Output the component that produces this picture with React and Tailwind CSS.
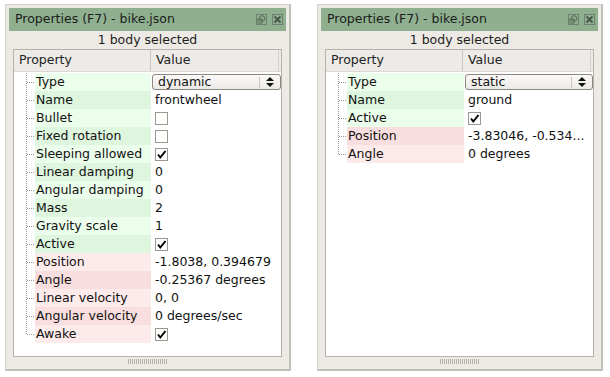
import React from 'react';

const leftRows = [
  { name: 'Type', kind: 'combo', value: 'dynamic', tone: 'g' },
  { name: 'Name', value: 'frontwheel', tone: 'g' },
  { name: 'Bullet', kind: 'check', checked: false, tone: 'g' },
  { name: 'Fixed rotation', kind: 'check', checked: false, tone: 'g' },
  { name: 'Sleeping allowed', kind: 'check', checked: true, tone: 'g' },
  { name: 'Linear damping', value: '0', tone: 'g' },
  { name: 'Angular damping', value: '0', tone: 'g' },
  { name: 'Mass', value: '2', tone: 'g' },
  { name: 'Gravity scale', value: '1', tone: 'g' },
  { name: 'Active', kind: 'check', checked: true, tone: 'g' },
  { name: 'Position', value: '-1.8038, 0.394679', tone: 'r' },
  { name: 'Angle', value: '-0.25367 degrees', tone: 'r' },
  { name: 'Linear velocity', value: '0, 0', tone: 'r' },
  { name: 'Angular velocity', value: '0 degrees/sec', tone: 'r' },
  { name: 'Awake', kind: 'check', checked: true, tone: 'r' },
];

const rightRows = [
  { name: 'Type', kind: 'combo', value: 'static', tone: 'g' },
  { name: 'Name', value: 'ground', tone: 'g' },
  { name: 'Active', kind: 'check', checked: true, tone: 'g' },
  { name: 'Position', value: '-3.83046, -0.534...', tone: 'r' },
  { name: 'Angle', value: '0 degrees', tone: 'r' },
];

const tones = {
  g: ['bg-[#ebfdeb]', 'bg-[#ddf6dd]'],
  r: ['bg-[#fdeaea]', 'bg-[#f8dede]'],
};

function Branch({ last }) {
  return (
    <svg width="21" height="18" className="shrink-0">
      <line x1="12.5" y1="0" x2="12.5" y2={last ? 9 : 18} stroke="#9a9a9a" strokeDasharray="1 1" />
      <line x1="13" y1="9.5" x2="21" y2="9.5" stroke="#9a9a9a" strokeDasharray="1 1" />
    </svg>
  );
}

function Check({ checked }) {
  return (
    <div className="w-[13px] h-[13px] border border-[#9b978f] bg-white flex items-center justify-center">
      {checked && (
        <svg width="11" height="11" viewBox="0 0 11 11">
          <path d="M2 5.5 L4.3 8.5 L9.5 2" fill="none" stroke="#000" strokeWidth="2" />
        </svg>
      )}
    </div>
  );
}

function Combo({ value }) {
  return (
    <div className="flex items-center w-full h-[16px] mr-[2px] border border-[#8c8880] rounded-[3px] bg-gradient-to-b from-[#fbfaf9] to-[#ebe9e5]">
      <span className="flex-1 pl-[5px] leading-none">{value}</span>
      <div className="w-px h-[11px] bg-[#c8c4be]" />
      <svg width="20" height="14" viewBox="0 0 20 14">
        <path d="M6 6 L10 2 L14 6 Z" fill="#111" />
        <path d="M6 8 L10 12 L14 8 Z" fill="#111" />
      </svg>
    </div>
  );
}

function Row({ row, i, last, propW }) {
  return (
    <div className="flex h-[18px] items-center">
      <Branch last={last} />
      <div className={`h-full flex items-center pl-[1px] ${tones[row.tone][i % 2]}`} style={{ width: propW }}>
        {row.name}
      </div>
      <div className="flex-1 h-full flex items-center pl-[4px] whitespace-nowrap overflow-hidden">
        {row.kind === 'check' ? <Check checked={row.checked} /> : row.kind === 'combo' ? <div className="-ml-[3px] flex-1"><Combo value={row.value} /></div> : row.value}
      </div>
    </div>
  );
}

function Panel({ rows, propW, colW }) {
  return (
    <div className="w-[286px] h-[367px] bg-[#edeae5] border border-[#d4d1cc] border-r-2 border-b-2 border-r-[#c2bfba] border-b-[#c2bfba] p-[3px] flex flex-col">
      <div className="h-[23px] bg-[#8fb08f] flex items-center pl-[6px] pr-[3px] text-[#1c1c1c]">
        <span className="flex-1">Properties (F7) - bike.json</span>
        <svg width="11" height="11" viewBox="0 0 11 11" className="mr-[5px]">
          <rect x="0.5" y="0.5" width="10" height="10" fill="none" stroke="#6f7f6f" />
          <circle cx="6" cy="4.5" r="2.8" fill="none" stroke="#556655" />
          <rect x="2" y="5" width="4" height="4" fill="none" stroke="#556655" />
        </svg>
        <svg width="11" height="11" viewBox="0 0 11 11">
          <rect x="0.5" y="0.5" width="10" height="10" fill="none" stroke="#6f7f6f" />
          <path d="M2.5 2.5 L8.5 8.5 M8.5 2.5 L2.5 8.5" stroke="#445544" strokeWidth="1.8" />
        </svg>
      </div>
      <div className="h-[18px] flex items-center justify-center text-[#1c1c1c]">1 body selected</div>
      <div className="mx-[4px] h-[308px] border border-[#b6b2ab] bg-white flex flex-col text-[#111]">
        <div className="flex h-[22px] bg-[#edebe7] border-b border-[#dcd9d4] items-center text-[#222]">
          <div className="h-full flex items-center pl-[5px] border-r border-[#c9c6c1]" style={{ width: colW }}>Property</div>
          <div className="flex-1 h-full flex items-center pl-[5px]">Value</div>
          <div className="w-[3px] h-full border-l border-[#d4d1cc]" />
        </div>
        <div className="pt-[1px]">
          {rows.map((r, i) => (
            <Row key={r.name} row={r} i={i} last={i === rows.length - 1} propW={propW} />
          ))}
        </div>
      </div>
      <div className="flex-1 flex items-center justify-center">
        <div className="w-[39px] h-[5px] bg-[repeating-linear-gradient(90deg,#b8b5b0_0px,#b8b5b0_1px,transparent_1px,transparent_2px)]" />
      </div>
    </div>
  );
}

export default function App() {
  return (
    <div className="w-[610px] h-[377px] bg-white flex gap-[26px] pl-[5px] pt-[4px] text-[12.5px] font-['DejaVu_Sans',sans-serif]">
      <Panel rows={leftRows} propW={116} colW={137} />
      <Panel rows={rightRows} propW={117} colW={137} />
    </div>
  );
}
